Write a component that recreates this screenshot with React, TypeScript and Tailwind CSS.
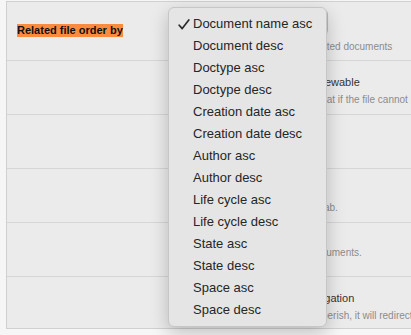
import React from "react";

const items = [
  "Document name asc",
  "Document desc",
  "Doctype asc",
  "Doctype desc",
  "Creation date asc",
  "Creation date desc",
  "Author asc",
  "Author desc",
  "Life cycle asc",
  "Life cycle desc",
  "State asc",
  "State desc",
  "Space asc",
  "Space desc",
];

function Title({ children }: { children: React.ReactNode }) {
  return <div className="text-[11px] leading-[14px] text-[#333333] whitespace-nowrap">{children}</div>;
}
function Desc({ children, className = "" }: { children: React.ReactNode; className?: string }) {
  return <div className={"text-[10px] leading-[14px] text-[#8c8c8c] whitespace-nowrap " + className}>{children}</div>;
}

export default function App() {
  return (
    <div className="relative w-[411px] h-[335px] overflow-hidden bg-[#f6f6f6] font-['Liberation_Sans',Arial,sans-serif]">
      <div className="ml-[6px] mt-[1px] w-[460px] border border-r-0 border-[#d0d0d0] bg-[#ebebeb]">
        {/* Row 1 */}
        <div className="flex h-[59px] border-b border-[#d6d6d6]">
          <div className="w-[173px] shrink-0 pl-[10px] pt-[15px]">
            <span className="bg-[#fd8b3d] text-[11px] leading-[13px] font-bold text-[#111111] inline-block">
              Related file order by
            </span>
          </div>
          <div className="pt-[7px]">
            <div className="h-[26px] w-[148px] rounded-[5px] border border-[#b9b9b9] bg-white shadow-[0_1px_1px_rgba(0,0,0,0.08)]" />
            <Desc className="mt-[5px]">Defines the usual order of all related documents</Desc>
          </div>
        </div>
        {/* Row 2 */}
        <div className="flex h-[54px] border-b border-[#d6d6d6]">
          <div className="w-[173px] shrink-0" />
          <div className="pt-[14px]">
            <Title>Open the file in a browser if viewable</Title>
            <Desc className="mt-[4px]">Download this file in original format if the file cannot be previewed</Desc>
          </div>
        </div>
        {/* Row 3 */}
        <div className="flex h-[54px] border-b border-[#d6d6d6]">
          <div className="w-[173px] shrink-0" />
          <div className="pt-[14px]">
            <Title>Show thumbnails</Title>
            <Desc className="mt-[4px]">Display file previews</Desc>
          </div>
        </div>
        {/* Row 4 */}
        <div className="flex h-[54px] border-b border-[#d6d6d6]">
          <div className="w-[173px] shrink-0" />
          <div className="pt-[14px]">
            <Title>Open in new tab</Title>
            <Desc className="mt-[4px]">Link will open in a new browser tab.</Desc>
          </div>
        </div>
        {/* Row 5 */}
        <div className="flex h-[54px] border-b border-[#d6d6d6]">
          <div className="w-[173px] shrink-0" />
          <div className="pt-[5px]">
            <Title>Show archived</Title>
            <Desc className="mt-[4px]">Include also archived related documents.</Desc>
          </div>
        </div>
        {/* Row 6 */}
        <div className="flex h-[51px]">
          <div className="w-[173px] shrink-0" />
          <div className="pt-[14px]">
            <Title>Enable smart related link navigation</Title>
            <Desc className="mt-[4px]">If this document's address is gibberish, it will redirect to the default page</Desc>
          </div>
        </div>
      </div>

      {/* Dropdown menu */}
      <div className="absolute left-[168px] top-[7px] w-[159px] rounded-[6px] border border-[#c6c6c6] bg-[#e5e5e5] py-[5px] shadow-[0_6px_18px_rgba(0,0,0,0.22)]">
        {items.map((it, i) => (
          <div key={it} className="relative flex h-[22px] items-center pl-[24px] text-[13px] text-[#262626] whitespace-nowrap">
            {i === 0 && (
              <svg className="absolute left-[9px] top-[6px]" width="12" height="11" viewBox="0 0 12 11">
                <path d="M1.2 6.2 L4.2 9.6 L10.8 1" fill="none" stroke="#2a2a2a" strokeWidth="1.7" strokeLinecap="round" strokeLinejoin="round" />
              </svg>
            )}
            {it}
          </div>
        ))}
      </div>
    </div>
  );
}
